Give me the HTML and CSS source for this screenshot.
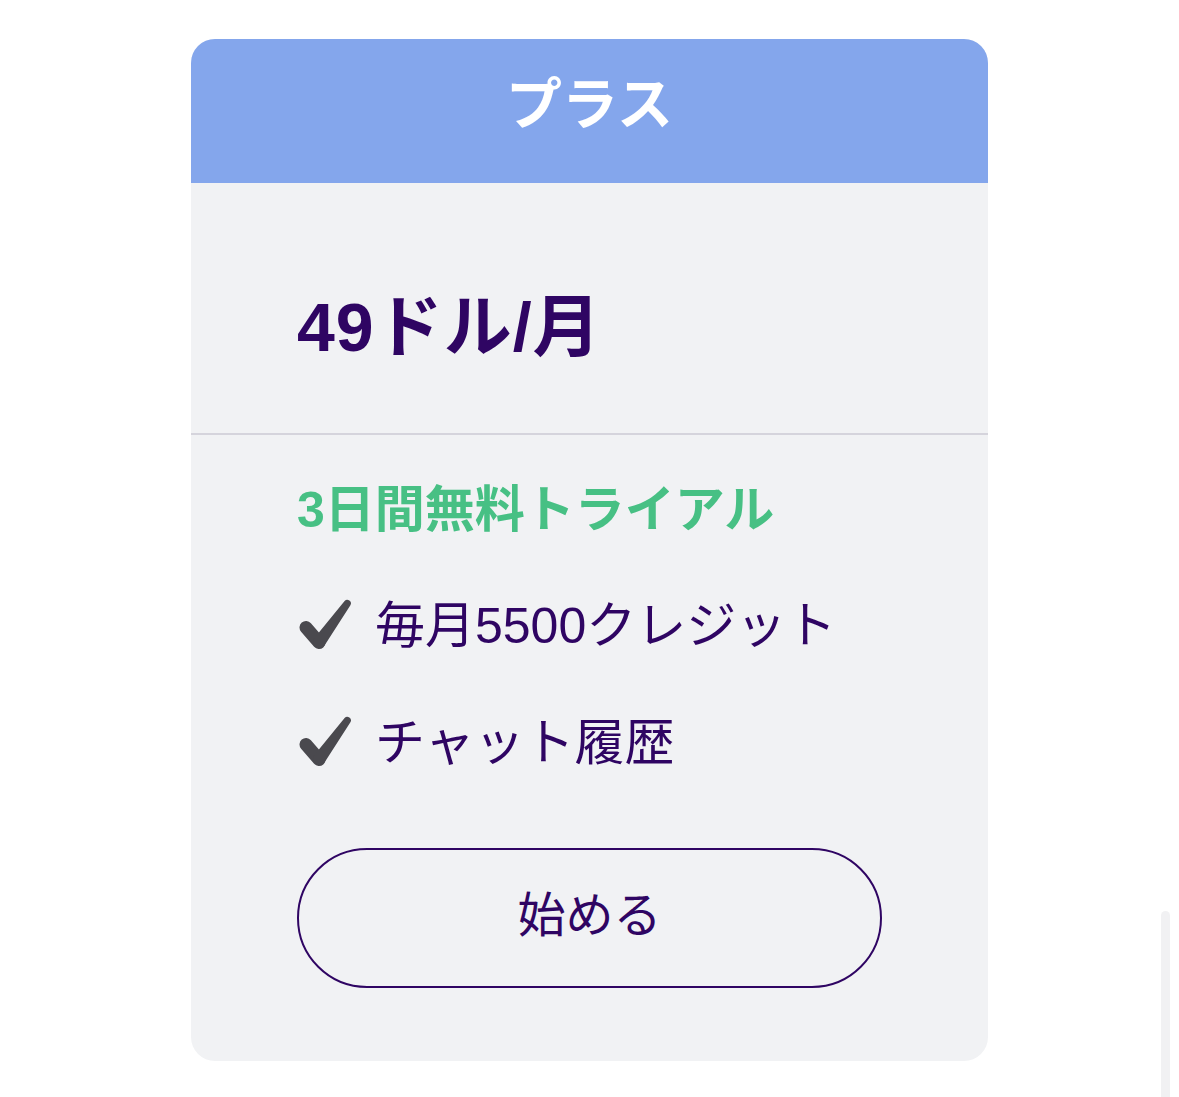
FILE: index.html
```html
<!DOCTYPE html>
<html lang="ja">
<head>
<meta charset="utf-8">
<title>プラス</title>
<link rel="stylesheet" href="styles.css">
</head>
<body>
<div class="card">
  <div class="card-header">プラス</div>
  <div class="price-section">
    <div class="price">49ドル/月</div>
  </div>
  <div class="details">
    <div class="trial">3日間無料トライアル</div>
    <ul class="features">
      <li class="feature">
        <svg class="check" viewBox="0 0 56 56" width="56" height="56" aria-hidden="true">
          <line x1="9" y1="29.5" x2="22" y2="44.5" stroke="#4a494e" stroke-width="13" stroke-linecap="round"/>
          <path d="M16.8 40.7 L47.6 3.0 A3.6 3.6 0 0 1 53.4 7.2 L27.2 48.0 A6.5 6.5 0 0 1 16.8 40.7 Z" fill="#4a494e"/>
        </svg>
        <span class="feature-text">毎月5500クレジット</span>
      </li>
      <li class="feature">
        <svg class="check" viewBox="0 0 56 56" width="56" height="56" aria-hidden="true">
          <line x1="9" y1="29.5" x2="22" y2="44.5" stroke="#4a494e" stroke-width="13" stroke-linecap="round"/>
          <path d="M16.8 40.7 L47.6 3.0 A3.6 3.6 0 0 1 53.4 7.2 L27.2 48.0 A6.5 6.5 0 0 1 16.8 40.7 Z" fill="#4a494e"/>
        </svg>
        <span class="feature-text">チャット履歴</span>
      </li>
    </ul>
    <button class="start-btn" type="button">始める</button>
  </div>
</div>
<div class="scroll-thumb"></div>
</body>
</html>
```

FILE: styles.css
```css
html, body {
  margin: 0;
  padding: 0;
  background: #ffffff;
}

body {
  font-family: "Liberation Sans", "Noto Sans CJK JP", sans-serif;
  overflow: hidden;
}

.card {
  width: 797px;
  margin: 39px auto 0;
  background: #f1f2f4;
  border-radius: 24px;
  overflow: hidden;
}

.card-header {
  box-sizing: border-box;
  height: 144px;
  padding-top: 38px;
  background: #84a6ec;
  color: #ffffff;
  font-size: 56px;
  font-weight: 700;
  line-height: 1;
  text-align: center;
}

.price-section {
  padding: 110px 106px 72px;
  border-bottom: 2px solid #d5d4dc;
}

.price {
  color: #2f0563;
  font-size: 68px;
  font-weight: 700;
  line-height: 1;
  letter-spacing: 1px;
}

.details {
  padding: 50px 106px 73px;
}

.trial {
  color: #47c084;
  font-size: 50px;
  font-weight: 700;
  line-height: 1;
}

.features {
  list-style: none;
  margin: 63px 0 0;
  padding: 0;
  display: flex;
  flex-direction: column;
  gap: 61px;
}

.feature {
  display: flex;
  align-items: center;
  gap: 22px;
  height: 56px;
}

.check {
  flex: none;
  display: block;
}

.feature-text {
  color: #2f0563;
  font-size: 50px;
  font-weight: 400;
  line-height: 1;
}

.start-btn {
  display: flex;
  align-items: center;
  justify-content: center;
  box-sizing: border-box;
  width: 585px;
  height: 140px;
  margin-top: 77px;
  padding: 0 0 5px;
  background: transparent;
  border: 2px solid #2f0563;
  border-radius: 70px;
  color: #2f0563;
  font-family: "Liberation Sans", "Noto Sans CJK JP", sans-serif;
  font-size: 48px;
  font-weight: 400;
  line-height: 1;
  cursor: pointer;
}

.scroll-thumb {
  position: fixed;
  left: 1161px;
  top: 911px;
  bottom: 0;
  width: 9px;
  background: #f1f1f3;
  border-radius: 5px 5px 0 0;
}
```
